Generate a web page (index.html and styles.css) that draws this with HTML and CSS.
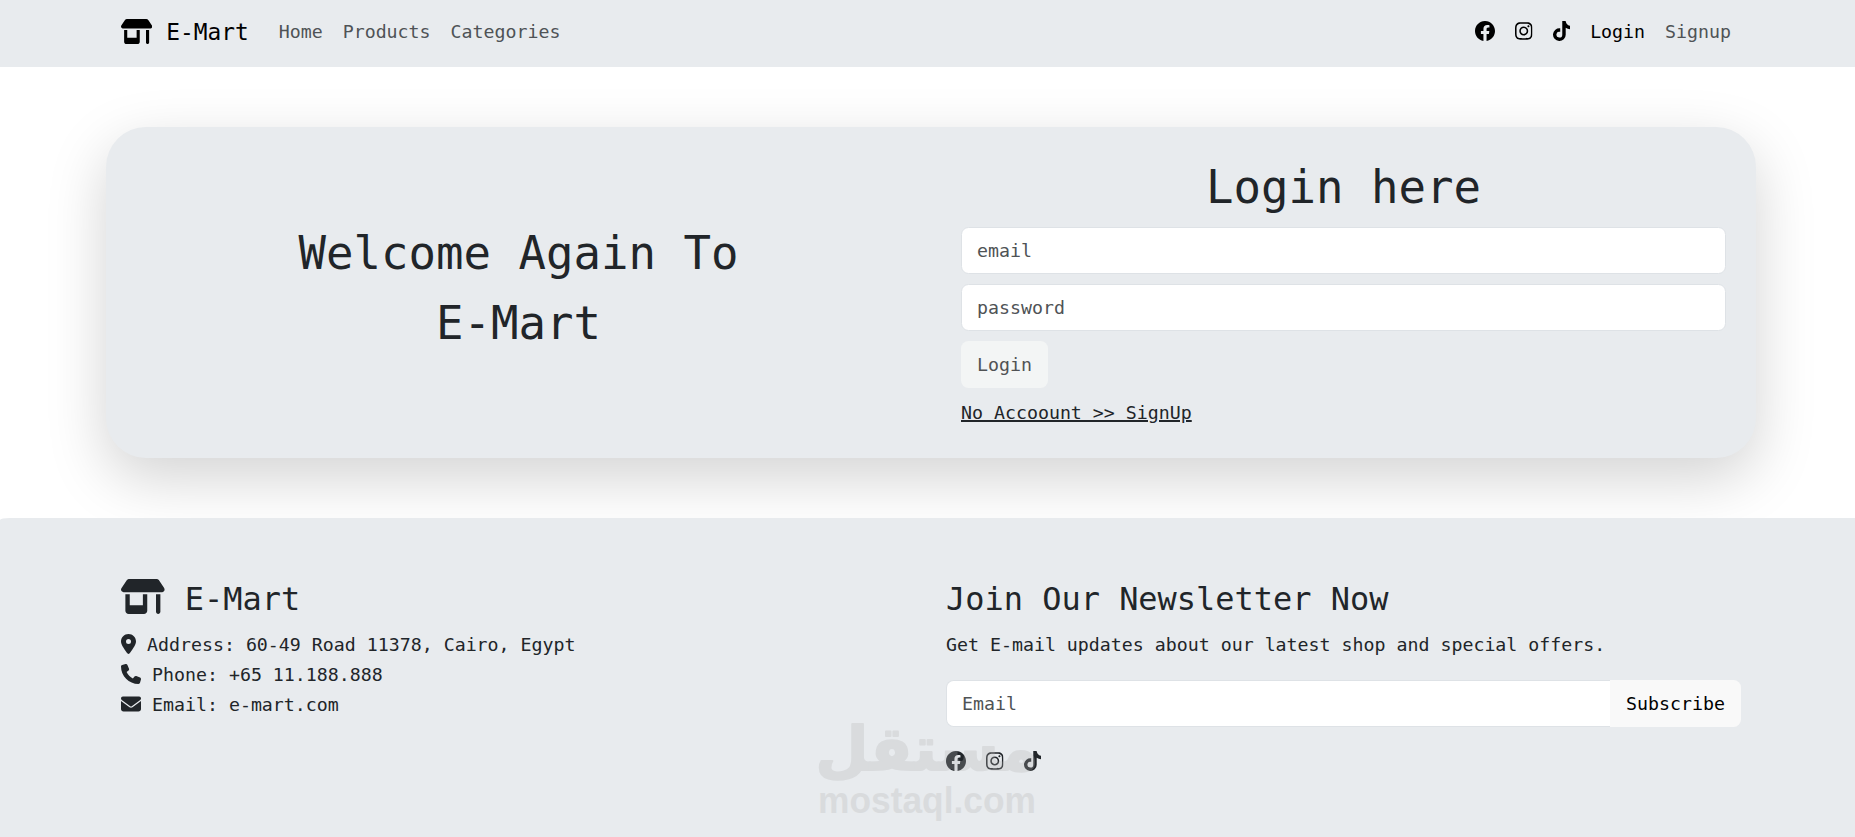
FILE: index.html
```html
<!DOCTYPE html>
<html lang="en">
<head>
    <meta charset="UTF-8">
    <meta name="viewport" content="width=device-width, initial-scale=1.0">
    <title>E-Mart</title>
    <link rel="stylesheet" href="styles.css">
</head>
<body>
    <!-- Shared icons -->
    <svg class="sprite" xmlns="http://www.w3.org/2000/svg">
        <symbol id="shop" viewBox="0 0 640 512"><path d="M36.8 192H603.2c20.3 0 36.8-16.5 36.8-36.8c0-7.3-2.2-14.4-6.2-20.4L558.2 21.4C549.3 8 534.4 0 518.3 0H121.7c-16 0-31 8-39.9 21.4L6.2 134.7c-4 6.1-6.2 13.2-6.2 20.4C0 175.5 16.5 192 36.8 192zM64 224V384v80c0 26.5 21.5 48 48 48H336c26.5 0 48-21.5 48-48V384 224H320V384H128V224H64zm448 0V480c0 17.7 14.3 32 32 32s32-14.3 32-32V224H512z"/></symbol>
        <symbol id="facebook" viewBox="0 0 16 16"><path d="M16 8.049c0-4.446-3.582-8.05-8-8.05C3.58 0-.002 3.603-.002 8.05c0 4.017 2.926 7.347 6.75 7.951v-5.625h-2.03V8.05H6.75V6.275c0-2.017 1.195-3.131 3.022-3.131.876 0 1.791.157 1.791.157v1.98h-1.009c-.993 0-1.303.621-1.303 1.258v1.51h2.218l-.354 2.326H9.25V16c3.824-.604 6.75-3.934 6.75-7.951"/></symbol>
        <symbol id="instagram" viewBox="0 0 448 512"><path d="M224.1 141c-63.6 0-114.9 51.3-114.9 114.9s51.3 114.9 114.9 114.9S339 319.5 339 255.9 287.7 141 224.1 141zm0 189.6c-41.1 0-74.7-33.5-74.7-74.7s33.5-74.7 74.7-74.7 74.7 33.5 74.7 74.7-33.6 74.7-74.7 74.7zm146.4-194.3c0 14.9-12 26.8-26.8 26.8-14.9 0-26.8-12-26.8-26.8s12-26.8 26.8-26.8 26.8 12 26.8 26.8zm76.1 27.2c-1.7-35.9-9.9-67.7-36.2-93.9-26.2-26.2-58-34.4-93.9-36.2-37-2.1-147.9-2.1-184.9 0-35.8 1.7-67.6 9.9-93.9 36.1s-34.4 58-36.2 93.9c-2.1 37-2.1 147.9 0 184.9 1.7 35.9 9.9 67.7 36.2 93.9s58 34.4 93.9 36.2c37 2.1 147.9 2.1 184.9 0 35.9-1.7 67.7-9.9 93.9-36.2 26.2-26.2 34.4-58 36.2-93.9 2.1-37 2.1-147.8 0-184.8zM398.8 388c-7.8 19.6-22.9 34.7-42.6 42.6-29.5 11.7-99.5 9-132.1 9s-102.7 2.6-132.1-9c-19.6-7.8-34.7-22.9-42.6-42.6-11.7-29.5-9-99.5-9-132.1s-2.6-102.7 9-132.1c7.8-19.6 22.9-34.7 42.6-42.6 29.5-11.7 99.5-9 132.1-9s102.7-2.6 132.1 9c19.6 7.8 34.7 22.9 42.6 42.6 11.7 29.5 9 99.5 9 132.1s2.7 102.7-9 132.1z"/></symbol>
        <symbol id="tiktok" viewBox="0 0 448 512"><path d="M448,209.91a210.06,210.06,0,0,1-122.77-39.25V349.38A162.55,162.55,0,1,1,185,188.31V278.2a74.62,74.62,0,1,0,52.23,71.18V0l88,0a121.18,121.18,0,0,0,1.86,22.17h0A122.18,122.18,0,0,0,381,102.39a121.43,121.43,0,0,0,67,20.14Z"/></symbol>
        <symbol id="location" viewBox="0 0 384 512"><path d="M215.7 499.2C267 435 384 279.4 384 192C384 86 298 0 192 0S0 86 0 192c0 87.4 117 243 168.3 307.2c12.3 15.3 35.1 15.3 47.4 0zM192 128a64 64 0 1 1 0 128 64 64 0 1 1 0-128z"/></symbol>
        <symbol id="phone" viewBox="0 0 512 512"><path d="M164.9 24.6c-7.7-18.6-28-28.5-47.4-23.2l-88 24C12.1 30.2 0 46 0 64C0 311.4 200.6 512 448 512c18 0 33.8-12.1 38.6-29.5l24-88c5.3-19.4-4.6-39.7-23.2-47.4l-96-40c-16.3-6.8-35.2-2.1-46.3 11.6L304.7 368C234.3 334.7 177.3 277.7 144 207.3L193.3 167c13.7-11.2 18.4-30 11.6-46.3l-40-96z"/></symbol>
        <symbol id="envelope" viewBox="0 0 512 512"><path d="M48 64C21.5 64 0 85.5 0 112c0 15.1 7.1 29.3 19.2 38.4L236.8 313.6c11.4 8.5 27 8.5 38.4 0L492.8 150.4c12.1-9.1 19.2-23.3 19.2-38.4c0-26.5-21.5-48-48-48H48zM0 176V384c0 35.3 28.7 64 64 64H448c35.3 0 64-28.7 64-64V176L294.4 339.2c-22.8 17.1-54 17.1-76.8 0L0 176z"/></symbol>
    </svg>

    <nav class="navbar">
        <a class="navbar-brand" href="#">
            <svg class="brand-icon"><use href="#shop"/></svg>
            <span>E-Mart</span>
        </a>
        <div class="nav-links">
            <a href="#">Home</a>
            <a href="#">Products</a>
            <a href="#">Categories</a>
        </div>
        <div class="nav-links nav-right">
            <div class="social">
                <svg class="icon"><use href="#facebook"/></svg>
                <svg class="icon icon-narrow"><use href="#instagram"/></svg>
                <svg class="icon icon-narrow"><use href="#tiktok"/></svg>
            </div>
            <a class="active" href="#">Login</a>
            <a href="#">Signup</a>
        </div>
    </nav>

    <main>
        <section class="login-card">
            <h1 class="welcome">Welcome Again To<br>E-Mart</h1>
            <form class="login-form">
                <h1>Login here</h1>
                <input class="form-control" type="email" placeholder="email">
                <input class="form-control" type="password" placeholder="password">
                <button class="btn btn-login" type="submit" disabled>Login</button>
                <a class="signup-link" href="#">No Accoount &gt;&gt; SignUp</a>
            </form>
        </section>
    </main>

    <footer class="footer">
        <div class="contact">
            <h2>
                <svg class="footer-icon"><use href="#shop"/></svg>
                <span>E-Mart</span>
            </h2>
            <p><svg class="icon icon-pin"><use href="#location"/></svg>Address: 60-49 Road 11378, Cairo, Egypt</p>
            <p><svg class="icon"><use href="#phone"/></svg>Phone: +65 11.188.888</p>
            <p><svg class="icon"><use href="#envelope"/></svg>Email: e-mart.com</p>
        </div>
        <div class="newsletter">
            <h2>Join Our Newsletter Now</h2>
            <p>Get E-mail updates about our latest shop and special offers.</p>
            <div class="input-group">
                <input class="form-control" type="email" placeholder="Email">
                <button class="btn btn-subscribe" type="button">Subscribe</button>
            </div>
            <div class="social">
                <svg class="icon"><use href="#facebook"/></svg>
                <svg class="icon icon-narrow"><use href="#instagram"/></svg>
                <svg class="icon icon-narrow"><use href="#tiktok"/></svg>
            </div>
        </div>
    </footer>

    <!-- Watermark -->
    <svg class="watermark" viewBox="0 0 220 130">
        <text class="mark-ar" x="109" y="73" text-anchor="middle">مستقل</text>
        <text class="mark-en" x="0" y="116" textLength="218" lengthAdjust="spacingAndGlyphs">mostaql.com</text>
    </svg>
</body>
</html>
```
FILE: styles.css
```css
* {
    box-sizing: border-box;
}
html {
    font-size: 20px;
}
body {
    margin: 0;
    height: 837px;
    overflow: hidden;
    position: relative;
    display: flex;
    flex-direction: column;
    background-color: #fff;
    color: #212529;
    font-family: "DejaVu Sans Mono", monospace;
    font-size: 18.26px;
    line-height: 30px;
}
h1, h2, p {
    margin: 0;
    font-weight: normal;
}
a {
    color: #4f5356;
    text-decoration: none;
}
svg {
    fill: currentColor;
    flex-shrink: 0;
}
.sprite {
    display: none;
}
.icon {
    width: 20px;
    height: 20px;
}
.icon-narrow {
    width: 17.5px;
}
.icon-pin {
    width: 15px;
}
.social {
    display: flex;
    align-items: center;
    gap: 20px;
}

/* Navbar */
.navbar {
    height: 67px;
    padding: 0 124px 0 121px;
    display: flex;
    align-items: center;
    background-color: #e8ebee;
    color: #000;
}
.navbar-brand {
    display: flex;
    align-items: center;
    gap: 14px;
    margin-right: 30px;
    padding-bottom: 4px;
    color: #000;
    font-size: 22.83px;
}
.brand-icon {
    width: 31.25px;
    height: 25px;
}
.nav-links {
    display: flex;
    align-items: center;
    gap: 20px;
    padding-bottom: 4px;
}
.nav-right {
    margin-left: auto;
}
.nav-right .social {
    padding-bottom: 1px;
}
.active {
    color: #000;
}

/* Login card */
main {
    padding: 60px 99px 60px 106px;
}
.login-card {
    display: grid;
    grid-template-columns: 1fr 1fr;
    align-items: center;
    height: 331px;
    padding: 0 30px;
    border-radius: 40px;
    background-color: #e8ebee;
    box-shadow: 0 20px 60px rgba(0, 0, 0, 0.175);
}
h1 {
    font-size: 45.66px;
    line-height: 60px;
    text-align: center;
}
.welcome {
    line-height: 70px;
    padding-right: 30px;
    padding-bottom: 8px;
}
.login-form {
    display: flex;
    flex-direction: column;
    align-items: flex-start;
    gap: 10px;
    margin-left: 30px;
}
.login-form h1 {
    width: 100%;
    padding-top: 2px;
    line-height: 58px;
}
.form-control {
    width: 100%;
    height: 47px;
    padding: 7px 15px;
    border: 1px solid #dee2e6;
    border-radius: 7.5px;
    background-color: #fff;
    font: inherit;
}
.form-control::placeholder {
    color: #4f5356;
    opacity: 1;
}
.btn {
    height: 47px;
    padding: 0 16px;
    border: none;
    border-radius: 7.5px;
    color: #000;
    font: inherit;
}
.btn-login {
    background-color: #f3f5f5;
    color: #505254;
}
.signup-link {
    color: #212529;
    text-decoration: underline;
    text-decoration-thickness: 2px;
}

/* Footer */
.footer {
    flex: 1;
    display: grid;
    grid-template-columns: 1fr 1fr;
    column-gap: 30px;
    padding: 60px 114px 0 121px;
    border-top-left-radius: 10px 2px;
    background-color: #e8ebee;
}
.footer h2 {
    display: flex;
    align-items: center;
    gap: 20px;
    height: 42px;
    margin-bottom: 10px;
    font-size: 31.96px;
}
.footer-icon {
    width: 43.75px;
    height: 35px;
    margin-bottom: 5px;
}
.contact p {
    display: flex;
    align-items: center;
    gap: 11px;
}
.contact .icon {
    margin-bottom: 2px;
}
.input-group {
    display: flex;
    margin: 20px 0 24px;
}
.input-group .form-control {
    border-right: none;
    border-radius: 7.5px 0 0 7.5px;
}
.btn-subscribe {
    border-radius: 0 7.5px 7.5px 0;
    background-color: #f9f9f9;
}

.watermark {
    position: absolute;
    left: 818px;
    top: 697px;
    width: 220px;
    height: 130px;
    overflow: visible;
    fill: #b2b2b2;
    opacity: 0.27;
    pointer-events: none;
}
.mark-ar {
    font: bold 61px "DejaVu Sans", sans-serif;
    stroke: #b2b2b2;
    stroke-width: 2px;
    stroke-linejoin: round;
}
.mark-en {
    font: bold 36px "Liberation Sans", sans-serif;
}
```
